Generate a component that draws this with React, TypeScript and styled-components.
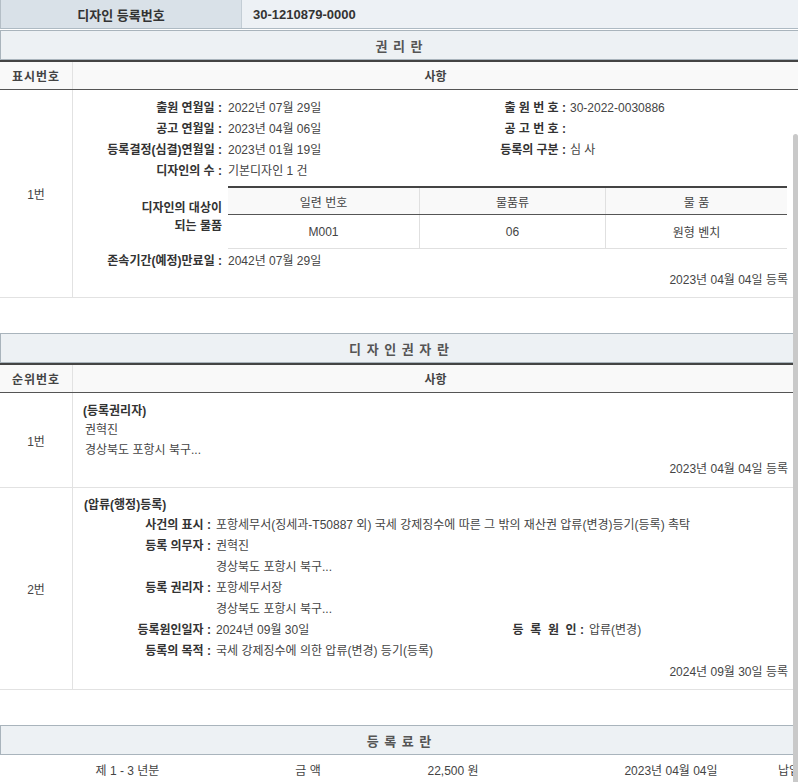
import React from 'react';
import styled, { createGlobalStyle } from 'styled-components';

const Global = createGlobalStyle`
  html, body { margin: 0; padding: 0; background: #fff; }
  body {
    font-family: "Liberation Sans", "Noto Sans CJK KR", sans-serif;
    font-size: 12px;
    color: #444;
  }
  * { box-sizing: border-box; }
`;

const Page = styled.div`
  position: relative;
  width: 798px;
  height: 782px;
  overflow: hidden;
`;

const ScrollThumb = styled.div`
  position: absolute;
  right: 0;
  top: 134px;
  bottom: 0;
  width: 5px;
  background: #c9c9c9;
  border-radius: 3px 3px 0 0;
`;

const RegRow = styled.div`
  display: grid;
  grid-template-columns: 241px 1fr;
  height: 29px;
  border-left: 1px solid #b4bec6;
  border-bottom: 1px solid #aebac3;
`;

const RegLabel = styled.div`
  background: #d9e1e8;
  border-right: 1px solid #c3cdd5;
  display: flex;
  align-items: center;
  justify-content: center;
  font-weight: bold;
  font-size: 13px;
  color: #333;
`;

const RegValue = styled.div`
  background: #edf1f5;
  display: flex;
  align-items: center;
  padding-left: 11px;
  font-weight: bold;
  font-size: 13px;
  color: #333;
`;

const Section = styled.section<{ $gap: number }>`
  margin-top: ${(p) => p.$gap}px;
`;

const SectionTitle = styled.div`
  height: 30px;
  border-top: 1px solid #a9b4bc;
  border-left: 1px solid #a9b4bc;
  border-bottom: 1px solid #a9b4bc;
  background: #edf1f4;
  display: flex;
  align-items: center;
  justify-content: center;
  font-weight: bold;
  font-size: 13px;
  letter-spacing: 1px;
  color: #555;
`;

const HeadRow = styled.div`
  display: grid;
  grid-template-columns: 73px 1fr;
  height: 30px;
  border-top: 2px solid #444;
  border-bottom: 1px solid #555;
  background: #f9f9f9;
  font-weight: bold;
  color: #444;
`;

const HeadCell = styled.div<{ $spaced?: boolean }>`
  display: flex;
  align-items: center;
  justify-content: center;
  letter-spacing: ${(p) => (p.$spaced ? '1px' : '0')};
  border-right: ${(p) => (p.$spaced ? '1px solid #e2e2e2' : 'none')};
`;

const BodyRow = styled.div`
  display: grid;
  grid-template-columns: 73px 1fr;
  border-bottom: 1px solid #e2e2e2;
`;

const NumCell = styled.div`
  border-right: 1px solid #e2e2e2;
  display: flex;
  align-items: center;
  justify-content: center;
  color: #444;
`;

const Content = styled.div<{ $pt: number; $pl: number; $pb: number }>`
  padding: ${(p) => p.$pt}px 0 ${(p) => p.$pb}px ${(p) => p.$pl}px;
  display: flex;
  flex-direction: column;
`;

const Line = styled.div<{ $cols: string; $lh?: number }>`
  display: grid;
  grid-template-columns: ${(p) => p.$cols};
  line-height: ${(p) => p.$lh ?? 21}px;
  white-space: nowrap;
`;

const Label = styled.div<{ $pr?: number }>`
  text-align: right;
  font-weight: bold;
  color: #333;
  padding-right: ${(p) => p.$pr ?? 2}px;
`;

const Value = styled.div<{ $pl?: number; $span?: boolean }>`
  padding-left: ${(p) => p.$pl ?? 4}px;
  color: #444;
  grid-column: ${(p) => (p.$span ? '2 / -1' : 'auto')};
`;

const Caption = styled.div<{ $lh: number; $indent?: number; $bold?: boolean }>`
  line-height: ${(p) => p.$lh}px;
  padding-left: ${(p) => p.$indent ?? 0}px;
  font-weight: ${(p) => (p.$bold ? 'bold' : 'normal')};
  color: ${(p) => (p.$bold ? '#333' : '#444')};
`;

const RegDate = styled.div<{ $lh: number }>`
  text-align: right;
  padding-right: 10px;
  line-height: ${(p) => p.$lh}px;
  color: #444;
`;

const GoodsRow = styled.div`
  display: grid;
  grid-template-columns: 151px 1fr;
  margin-top: 4px;
  margin-bottom: 2px;
`;

const GoodsLabel = styled.div`
  display: flex;
  align-items: center;
  justify-content: flex-end;
  text-align: right;
  font-weight: bold;
  color: #333;
  line-height: 18px;
  padding-right: 2px;
  padding-bottom: 2px;
`;

const GoodsTable = styled.div`
  margin-left: 4px;
  margin-right: 11px;
  border-top: 2px solid #444;
  border-bottom: 1px solid #e0e0e0;
`;

const GoodsGrid = styled.div<{ $head?: boolean }>`
  display: grid;
  grid-template-columns: 191px 186px 1fr;
  height: ${(p) => (p.$head ? 27 : 33)}px;
  background: ${(p) => (p.$head ? '#f9f9f9' : '#fff')};
  border-bottom: ${(p) => (p.$head ? '1px solid #555' : 'none')};
`;

const GoodsCell = styled.div`
  display: flex;
  align-items: center;
  justify-content: center;
  color: #444;
  & + & {
    border-left: 1px solid #e0e0e0;
  }
`;

const FeeRow = styled.div`
  display: grid;
  grid-template-columns: 255px 106px 184px 233px 1fr;
  height: 28px;
  align-items: center;
  white-space: nowrap;
  color: #444;
`;

const FeeCell = styled.div<{ $align?: 'left' | 'center'; $pl?: number }>`
  text-align: ${(p) => p.$align ?? 'center'};
  padding-left: ${(p) => p.$pl ?? 0}px;
`;

const COLS1 = '151px 196px 148px 1fr';
const COLS2 = '129px 225px 148px 1fr';

export default function App() {
  return (
    <>
      <Global />
      <Page>
        <RegRow>
          <RegLabel>디자인 등록번호</RegLabel>
          <RegValue>30-1210879-0000</RegValue>
        </RegRow>

        <Section $gap={1}>
          <SectionTitle>권 리 란</SectionTitle>
          <HeadRow>
            <HeadCell $spaced>표시번호</HeadCell>
            <HeadCell>사항</HeadCell>
          </HeadRow>
          <BodyRow>
            <NumCell>1번</NumCell>
            <Content $pt={8} $pl={0} $pb={8}>
              <Line $cols={COLS1}>
                <Label>출원 연월일 :</Label>
                <Value>2022년 07월 29일</Value>
                <Label>출 원 번 호 :</Label>
                <Value $pl={2}>30-2022-0030886</Value>
              </Line>
              <Line $cols={COLS1}>
                <Label>공고 연월일 :</Label>
                <Value>2023년 04월 06일</Value>
                <Label>공 고 번 호 :</Label>
                <Value $pl={2}></Value>
              </Line>
              <Line $cols={COLS1}>
                <Label>등록결정(심결)연월일 :</Label>
                <Value>2023년 01월 19일</Value>
                <Label>등록의 구분 :</Label>
                <Value $pl={2}>심 사</Value>
              </Line>
              <Line $cols={COLS1}>
                <Label>디자인의 수 :</Label>
                <Value $span>기본디자인 1 건</Value>
              </Line>
              <GoodsRow>
                <GoodsLabel>
                  디자인의 대상이
                  <br />
                  되는 물품
                </GoodsLabel>
                <GoodsTable>
                  <GoodsGrid $head>
                    <GoodsCell>일련 번호</GoodsCell>
                    <GoodsCell>물품류</GoodsCell>
                    <GoodsCell>물 품</GoodsCell>
                  </GoodsGrid>
                  <GoodsGrid>
                    <GoodsCell>M001</GoodsCell>
                    <GoodsCell>06</GoodsCell>
                    <GoodsCell>원형 벤치</GoodsCell>
                  </GoodsGrid>
                </GoodsTable>
              </GoodsRow>
              <Line $cols={COLS1}>
                <Label>존속기간(예정)만료일 :</Label>
                <Value $span>2042년 07월 29일</Value>
              </Line>
              <RegDate $lh={17}>2023년 04월 04일 등록</RegDate>
            </Content>
          </BodyRow>
        </Section>

        <Section $gap={35}>
          <SectionTitle>디 자 인 권 자 란</SectionTitle>
          <HeadRow>
            <HeadCell $spaced>순위번호</HeadCell>
            <HeadCell>사항</HeadCell>
          </HeadRow>
          <BodyRow>
            <NumCell>1번</NumCell>
            <Content $pt={9} $pl={10} $pb={9}>
              <Caption $lh={19} $bold>(등록권리자)</Caption>
              <Caption $lh={19} $indent={2}>권혁진</Caption>
              <Caption $lh={21} $indent={2}>경상북도 포항시 북구...</Caption>
              <RegDate $lh={17}>2023년 04월 04일 등록</RegDate>
            </Content>
          </BodyRow>
          <BodyRow>
            <NumCell>2번</NumCell>
            <Content $pt={8} $pl={11} $pb={7}>
              <Caption $lh={19} $bold>(압류(행정)등록)</Caption>
              <Line $cols={COLS2}>
                <Label>사건의 표시 :</Label>
                <Value $pl={3} $span>
                  포항세무서(징세과-T50887 외) 국세 강제징수에 따른 그 밖의 재산권 압류(변경)등기(등록) 촉탁
                </Value>
              </Line>
              <Line $cols={COLS2}>
                <Label>등록 의무자 :</Label>
                <Value $pl={3} $span>권혁진</Value>
              </Line>
              <Line $cols={COLS2}>
                <Label></Label>
                <Value $pl={3} $span>경상북도 포항시 북구...</Value>
              </Line>
              <Line $cols={COLS2}>
                <Label>등록 권리자 :</Label>
                <Value $pl={3} $span>포항세무서장</Value>
              </Line>
              <Line $cols={COLS2}>
                <Label></Label>
                <Value $pl={3} $span>경상북도 포항시 북구...</Value>
              </Line>
              <Line $cols={COLS2}>
                <Label>등록원인일자 :</Label>
                <Value $pl={3}>2024년 09월 30일</Value>
                <Label>{'등\u00a0\u00a0록\u00a0\u00a0원\u00a0\u00a0인\u00a0:'}</Label>
                <Value $pl={3}>압류(변경)</Value>
              </Line>
              <Line $cols={COLS2}>
                <Label>등록의 목적 :</Label>
                <Value $pl={3} $span>국세 강제징수에 의한 압류(변경) 등기(등록)</Value>
              </Line>
              <RegDate $lh={20}>2024년 09월 30일 등록</RegDate>
            </Content>
          </BodyRow>
        </Section>

        <Section $gap={35}>
          <SectionTitle>등 록 료 란</SectionTitle>
          <FeeRow>
            <FeeCell>제 1 - 3 년분</FeeCell>
            <FeeCell>금 액</FeeCell>
            <FeeCell>22,500 원</FeeCell>
            <FeeCell $pl={19}>2023년 04월 04일</FeeCell>
            <FeeCell $align="left">납입</FeeCell>
          </FeeRow>
        </Section>

        <ScrollThumb />
      </Page>
    </>
  );
}
